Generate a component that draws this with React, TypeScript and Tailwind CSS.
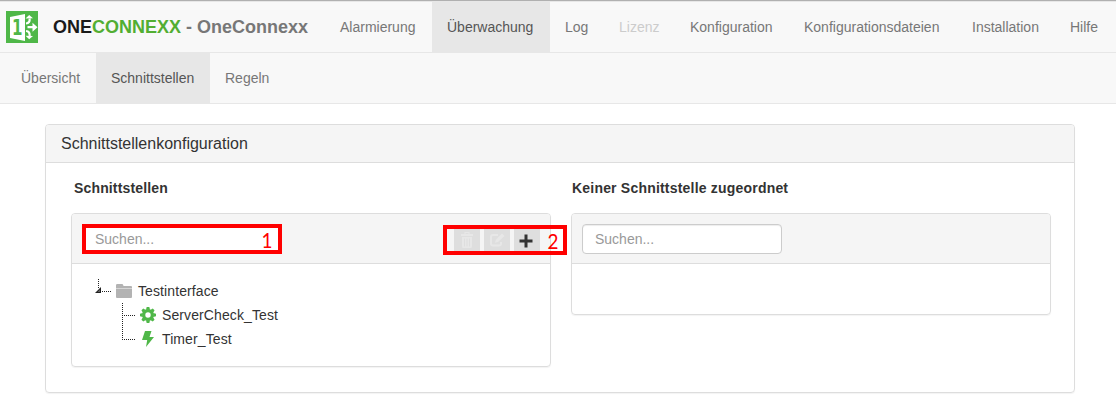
import React from "react";

const mainNav = [
  { label: "Alarmierung", width: "w-[107px]" },
  { label: "Überwachung", width: "w-[118px]", active: true },
  { label: "Log", width: "w-[54px]" },
  { label: "Lizenz", width: "w-[71px]", disabled: true },
  { label: "Konfiguration", width: "w-[114px]" },
  { label: "Konfigurationsdateien", width: "w-[168px]" },
  { label: "Installation", width: "w-[98px]" },
  { label: "Hilfe", width: "w-[58px]" },
];

const subNav = [
  { label: "Übersicht", width: "w-[90px]" },
  { label: "Schnittstellen", width: "w-[114px]", active: true },
  { label: "Regeln", width: "w-[75px]" },
];

type NavItemProps = { label: string; width: string; active?: boolean; disabled?: boolean };

function NavItem({ label, width, active, disabled }: NavItemProps) {
  const tone = active ? "bg-[#e7e7e7] text-[#555]" : disabled ? "text-[#ccc]" : "text-[#777]";
  return (
    <a className={`block h-[50px] shrink-0 pl-[15px] leading-[50px] whitespace-nowrap ${width} ${tone}`}>{label}</a>
  );
}

function Logo() {
  return (
    <svg width="32" height="32" viewBox="0 0 32 32" className="shrink-0">
      <rect width="32" height="32" fill="#4fb748" />
      <path d="M4 6 19 3v27L4 27z" fill="#fff" />
      <text x="6" y="23.5" fontFamily="DejaVu Sans" fontWeight="bold" fontSize="21" textLength="10.500" lengthAdjust="spacingAndGlyphs" fill="#4fb748">
        1
      </text>
      <g fill="none" stroke="#fff" strokeWidth="2.200">
        <path d="M20 12.500c2.800-.3 4-2 3.600-5M20 20c2.800.3 4 2 3.600 5M21.500 16.200H28" />
      </g>
      <path d="m19.500 7.500 3.700-3.500 3.800 3.200zM19.500 24.800l3.700 3.500 3.800-3.200zM26.500 11.700l5 4.500-5 4.500z" fill="#fff" />
    </svg>
  );
}

const gearAngles = [0, 45, 90, 135, 180, 225, 270, 315];

function GearIcon() {
  return (
    <svg width="16" height="16" viewBox="-8 -8 16 16" className="shrink-0">
      <circle r="4.300" fill="none" stroke="#4fb748" strokeWidth="3.200" />
      {gearAngles.map((angle) => (
        <path key={angle} d="M-2-5.200-1.300-8h2.600L2-5.200z" fill="#4fb748" transform={`rotate(${angle})`} />
      ))}
    </svg>
  );
}

function ToolButton({ dim, children }: { dim?: boolean; children: React.ReactNode }) {
  return (
    <button className={`flex h-[22px] w-[26px] items-center justify-center bg-[#dedede] ${dim ? "text-[#e7e7e7]" : "text-[#333]"}`}>
      {children}
    </button>
  );
}

export default function App() {
  return (
    <div className="h-[407px] w-[1116px] overflow-hidden bg-white font-['Liberation_Sans',Arial,sans-serif] text-[14px] leading-5 text-[#333]">
      <header className="border-t border-[#b0b0b0]">
        <nav className="flex h-[52px] border-y border-[#e7e7e7] bg-[#f8f8f8]">
          <div className="flex w-[325px] shrink-0 items-center pl-[6px]">
            <Logo />
            <span className="ml-[15px] text-[18px] leading-[50px] font-bold whitespace-nowrap text-[#777]">
              <span className="text-[#1a1a1a]">ONE</span>
              <span className="text-[#52ae32]">CONNEXX</span> - OneConnexx
            </span>
          </div>
          {mainNav.map((item) => (
            <NavItem key={item.label} {...item} />
          ))}
        </nav>
        <nav className="flex h-[51px] border-b border-[#e7e7e7] bg-[#f8f8f8] pl-[6px]">
          {subNav.map((item) => (
            <NavItem key={item.label} {...item} />
          ))}
        </nav>
      </header>

      <main className="mt-5 ml-[45px] h-[269px] w-[1030px] rounded border border-[#ddd] shadow-[0_1px_1px_rgba(0,0,0,0.05)]">
        <h1 className="h-[38px] rounded-t-[3px] border-b border-[#ddd] bg-[#f5f5f5] pl-[15px] text-[16px] leading-[37px]">
          Schnittstellenkonfiguration
        </h1>
        <div className="flex gap-5 pt-[15px] pl-[25px]">
          <section className="w-[480px]">
            <h2 className="mb-[15px] pl-[3px] font-bold tracking-[0.15px]">Schnittstellen</h2>
            <div className="h-[154px] rounded border border-[#ddd] shadow-[0_1px_1px_rgba(0,0,0,0.05)]">
              <div className="flex h-[50px] justify-between rounded-t-[3px] border-b border-[#ddd] bg-[#f5f5f5] pl-[10px]">
                <div className="mt-[10px] flex h-[30px] w-[200px] items-center justify-between border-4 border-[#f00] bg-white pr-[5px] pl-[9px]">
                  <span className="text-[#999]">Suchen...</span>
                  <span className="scale-x-90 font-['Lato',sans-serif] text-[21px] leading-none text-[#f00]">1</span>
                </div>
                <div className="relative mt-[11px] mr-[-17px] flex h-[30px] w-[124px] items-center gap-1 border-4 border-[#f00] pl-[7px]">
                  <ToolButton dim>
                    <svg width="14" height="16" viewBox="0 0 14 16" fill="currentColor">
                      <path d="M4.500 0h5v2H13v2H1V2h3.500zM5.500 1v1h3V1zM2 5h10v9.500a1.500 1.500 0 0 1-1.500 1.500h-7A1.500 1.500 0 0 1 2 14.500zM4 6.500v8h1v-8zm2.500 0v8h1v-8zm2.500 0v8h1v-8z" fillRule="evenodd" />
                    </svg>
                  </ToolButton>
                  <ToolButton dim>
                    <svg width="16" height="14" viewBox="0 0 16 14" fill="none" stroke="currentColor" strokeWidth="2">
                      <path d="M9 2H4a2 2 0 0 0-2 2v6.500a2 2 0 0 0 2 2h6a2 2 0 0 0 2-2V9" />
                      <path d="m13 .5 2.500 2.500-6.500 6-3 .8.800-3z" fill="currentColor" stroke="none" />
                    </svg>
                  </ToolButton>
                  <ToolButton>
                    <svg width="14" height="14" viewBox="0 0 14 14" className="mt-px mr-[2px]" fill="currentColor">
                      <path d="M5.500 .5h3v5h5v3h-5v5h-3v-5h-5v-3h5z" />
                    </svg>
                  </ToolButton>
                  <span className="ml-[3px] scale-x-90 font-['Lato',sans-serif] text-[21px] leading-none text-[#f00]">2</span>
                </div>
              </div>
              <div className="flex flex-col pt-[15px] pl-[20px]">
                <div className="flex h-6 items-center">
                  <svg width="24" height="24" viewBox="0 0 24 24" className="shrink-0">
                    <path d="M6.500 0v9M10 12.500h10" stroke="#222" strokeDasharray="1 1" />
                    <path d="M9 8v6H3z" fill="#222" />
                    <path d="M8 10.500V13H5.500z" fill="#666" />
                  </svg>
                  <svg width="16" height="14" viewBox="0 0 16 14" className="shrink-0" fill="#b3b3b3">
                    <path d="M0 5V1.200Q0 0 1.200 0H6q1 0 1.200 1l.3 1H15q1 0 1 1v2z" />
                    <path d="M0 4h16v9q0 1-1 1H1q-1 0-1-1z" />
                    <path d="M0 4h16v1H0z" fill="#d6d6d6" />
                  </svg>
                  <span className="ml-[6px] tracking-[0.1px]">Testinterface</span>
                </div>
                <div className="flex h-6 items-center pl-6">
                  <svg width="24" height="24" viewBox="0 0 24 24" className="shrink-0">
                    <path d="M6.500 0v24M8 12.500h11" stroke="#222" strokeDasharray="1 1" />
                  </svg>
                  <GearIcon />
                  <span className="ml-[6px] tracking-[0.1px]">ServerCheck_Test</span>
                </div>
                <div className="flex h-6 items-center pl-6">
                  <svg width="24" height="24" viewBox="0 0 24 24" className="shrink-0">
                    <path d="M6.500 0v13M8 12.500h11" stroke="#222" strokeDasharray="1 1" />
                  </svg>
                  <svg width="16" height="16" viewBox="0 0 16 16" className="shrink-0" fill="#4fb748">
                    <path d="M5 0h6.500L9.500 6H14L6 16l1.200-7H2z" />
                  </svg>
                  <span className="ml-[6px] tracking-[0.1px]">Timer_Test</span>
                </div>
              </div>
            </div>
          </section>
          <section className="w-[480px]">
            <h2 className="mb-[15px] pl-px font-bold tracking-[0.2px]">Keiner Schnittstelle zugeordnet</h2>
            <div className="h-[102px] rounded border border-[#ddd] shadow-[0_1px_1px_rgba(0,0,0,0.05)]">
              <div className="h-[50px] rounded-t-[3px] border-b border-[#ddd] bg-[#f5f5f5] pt-[10px] pl-[10px]">
                <div className="flex h-[30px] w-[200px] items-center rounded border border-[#ccc] bg-white pl-3 text-[#999] shadow-[inset_0_1px_1px_rgba(0,0,0,0.075)]">
                  Suchen...
                </div>
              </div>
            </div>
          </section>
        </div>
      </main>
    </div>
  );
}
